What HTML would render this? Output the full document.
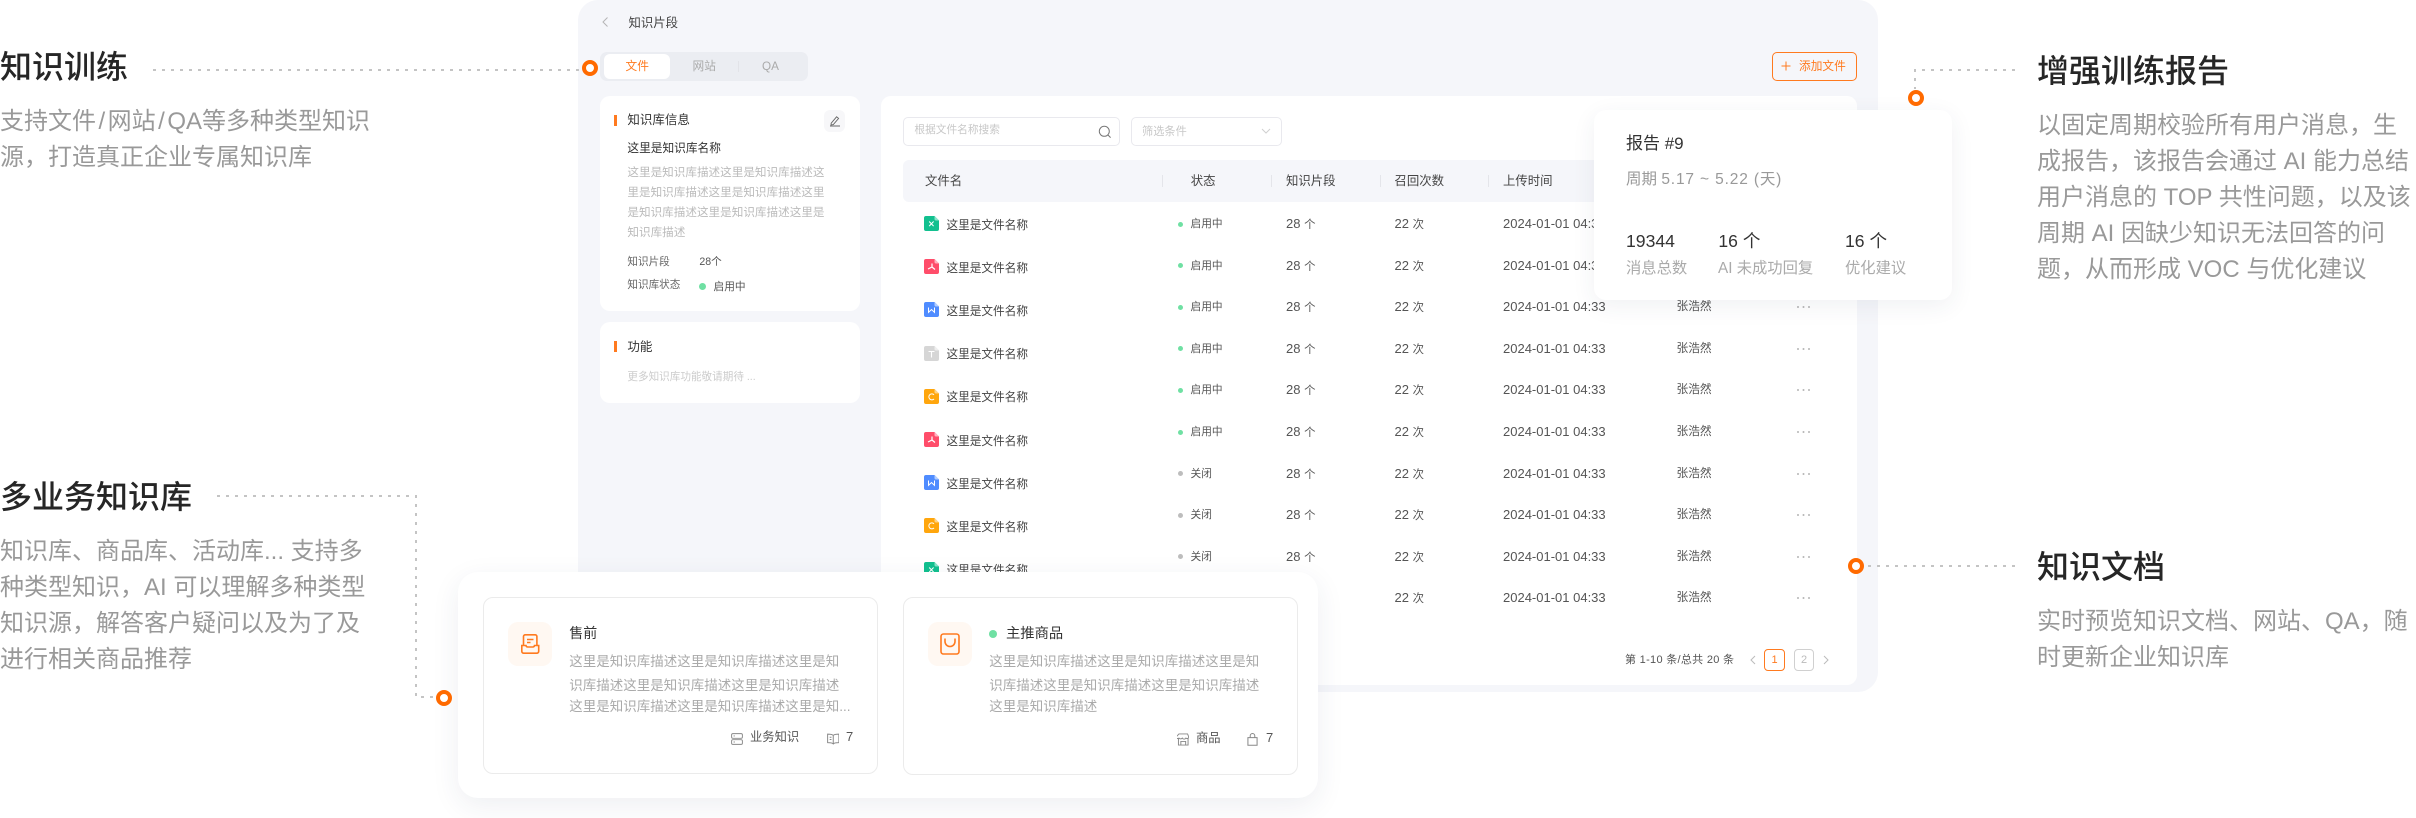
<!DOCTYPE html>
<html lang="zh-CN"><head><meta charset="utf-8"><title>知识训练</title>
<style>
html,body{margin:0;padding:0;width:2416px;height:818px;overflow:hidden;background:#fff}
body{position:relative;font-family:"Liberation Sans","Noto Sans CJK SC",sans-serif;color:#333}
div,span,svg{box-sizing:border-box}
.a{position:absolute}
.t{position:absolute;white-space:nowrap;line-height:20px;height:20px}
.h{font-size:32px;line-height:44px;height:44px;font-weight:500;color:#262626;position:absolute;white-space:nowrap}
.b{font-size:24px;line-height:36px;height:36px;color:#999;position:absolute;white-space:nowrap;left:0}
.sl{padding:0 2.5px}
.mk{position:absolute;width:16px;height:16px;border:4.5px solid #ff6a00;border-radius:50%;background:#fff;z-index:30}
.card{position:absolute;background:#fff;border-radius:10px}
.bar{position:absolute;left:614px;width:2.5px;background:#ff7a1f}
.s{font-size:11.6px;color:#bbb;margin-top:1px}
.th{font-size:12.4px;color:#444;top:171px}
.dv{position:absolute;top:175px;height:12px;width:1px;background:#e4e5ea}
.r{position:absolute;left:0;top:0;width:2416px;height:20px;margin-top:1px}
.d{position:absolute;width:5px;height:5px;border-radius:50%;left:1178px;top:7.5px;background:#6fe0a3}
.g{background:#bdbdbd}
.r span{position:absolute;top:0;line-height:20px;white-space:nowrap;color:#555}
.st{left:1190.5px;font-size:10.7px}
.n{left:1286px;font-size:13px}
.n i,.c i{font-style:normal;font-size:11.4px}
.c{left:1394.5px;font-size:13px}
.dt{left:1503px;font-size:13px}
.u{left:1676.5px;font-size:11.7px}
.m{left:1796.5px;top:0;width:14px;height:20px;font-size:11px}
.m::before{content:"";position:absolute;left:0;top:9px;width:2px;height:2px;border-radius:50%;background:#b5b5b5;box-shadow:5.5px 0 #b5b5b5,11px 0 #b5b5b5}
.fn{position:absolute;left:946.5px;font-size:11.65px;line-height:20px;height:20px;white-space:nowrap;color:#444;margin-top:1px}
.fi{position:absolute;left:924px;width:15px;height:15px}
.rp{font-size:15.3px;color:#aaa}
.ds{font-size:13.5px;color:#aaa}
</style></head><body>

<!-- panel -->
<div class="a" style="left:578px;top:0;width:1300px;height:692px;background:#f5f6fa;border-radius:20px"></div>
<svg class="a" style="left:600px;top:15px" width="10" height="14" viewBox="0 0 10 14" fill="none"><path d="M7.5 2.500L3 7l4.500 4.500" stroke="#b5b5b5" stroke-width="1"/></svg>
<div class="t" style="left:628.500px;top:12.500px;font-size:12.400px;color:#444">知识片段</div>

<div class="a" style="left:600px;top:52px;width:208px;height:29px;background:#ebedf2;border-radius:7px"></div>
<div class="a" style="left:604px;top:54px;width:66px;height:25px;background:#fff;border-radius:6px"></div>
<div class="t" style="left:625.500px;top:57px;font-size:11.700px;color:#ff7a1f">文件</div>
<div class="t" style="left:692.500px;top:57px;font-size:11.700px;color:#aaa">网站</div>
<div class="t" style="left:762px;top:57px;font-size:11.700px;color:#aaa">QA</div>
<div class="a" style="left:738px;top:61px;width:1px;height:11px;background:#e2e3e8"></div>

<div class="a" style="left:1772px;top:52px;width:85px;height:29px;border:1px solid #ff7a1f;border-radius:5px"></div>
<svg class="a" style="left:1781px;top:61px" width="10" height="10" viewBox="0 0 10 10"><path d="M5 .5v9M.5 5h9" stroke="#ff7a1f" stroke-width="1"/></svg>
<div class="t" style="left:1799px;top:57px;font-size:11.700px;color:#ff7a1f">添加文件</div>

<!-- left cards -->
<div class="card" style="left:600px;top:96px;width:260px;height:215px"></div>
<div class="bar" style="top:115px;height:11px"></div>
<div class="t" style="left:627.400px;top:110px;font-size:12.500px;color:#333">知识库信息</div>
<div class="a" style="left:824px;top:110px;width:21px;height:22px;background:#f7f7f9;border-radius:6px"></div>
<svg class="a" style="left:829px;top:115px" width="12" height="12" viewBox="0 0 12 12" fill="none" stroke="#666" stroke-width=".9"><path d="M2.200 8.200L7.600 1.800l2 1.600-5.300 6.200-2.300.4zM1 11h10"/></svg>
<div class="t" style="left:627.400px;top:138.700px;font-size:11.700px;color:#333">这里是知识库名称</div>
<div class="t s" style="left:627.400px;top:162.300px">这里是知识库描述这里是知识库描述这</div>
<div class="t s" style="left:627.400px;top:182.300px">里是知识库描述这里是知识库描述这里</div>
<div class="t s" style="left:627.400px;top:202.300px">是知识库描述这里是知识库描述这里是</div>
<div class="t s" style="left:627.400px;top:222.300px">知识库描述</div>
<div class="t" style="left:627.400px;top:251.700px;font-size:10.600px;color:#666">知识片段</div>
<div class="t" style="left:699.400px;top:251.700px;font-size:10.600px;color:#555">28个</div>
<div class="t" style="left:627.400px;top:275px;font-size:10.600px;color:#666">知识库状态</div>
<div class="a" style="left:699px;top:283px;width:7px;height:7px;border-radius:50%;background:#6fe0a3"></div>
<div class="t" style="left:713.500px;top:277px;font-size:10.700px;color:#555">启用中</div>

<div class="card" style="left:600px;top:322px;width:260px;height:81px"></div>
<div class="bar" style="top:341px;height:11px"></div>
<div class="t" style="left:627.400px;top:336.500px;font-size:12.500px;color:#333">功能</div>
<div class="t" style="left:627.400px;top:366.500px;font-size:10.600px;color:#ccc">更多知识库功能敬请期待 ...</div>

<!-- main card -->
<div class="card" style="left:881px;top:96px;width:976px;height:589px"></div>
<div class="a" style="left:903px;top:117px;width:217px;height:29px;border:1px solid #e9e9ee;border-radius:5px"></div>
<div class="t" style="left:914.400px;top:120px;font-size:10.700px;color:#c8c8c8">根据文件名称搜索</div>
<svg class="a" style="left:1098px;top:125px" width="14" height="14" viewBox="0 0 14 14" fill="none" stroke="#777" stroke-width="1"><circle cx="6.300" cy="6.300" r="5"/><path d="M10 10l2.600 2.600"/></svg>
<div class="a" style="left:1130.600px;top:117px;width:151px;height:29px;border:1px solid #e9e9ee;border-radius:5px"></div>
<div class="t" style="left:1142px;top:121.700px;font-size:11.200px;color:#c8c8c8">筛选条件</div>
<svg class="a" style="left:1261px;top:127px" width="10" height="8" viewBox="0 0 10 8" fill="none"><path d="M1 2l4 4 4-4" stroke="#d0d0d0"/></svg>

<div class="a" style="left:903px;top:160px;width:932px;height:42px;background:#f5f6fa;border-radius:6px"></div>
<div class="t th" style="left:925px">文件名</div>
<div class="dv" style="left:1162px"></div>
<div class="t th" style="left:1190.700px">状态</div>
<div class="dv" style="left:1270.600px"></div>
<div class="t th" style="left:1286px">知识片段</div>
<div class="dv" style="left:1379.700px"></div>
<div class="t th" style="left:1394.500px">召回次数</div>
<div class="dv" style="left:1487.800px"></div>
<div class="t th" style="left:1503px">上传时间</div>

<!-- file icons + names -->
<svg class="fi" style="top:216px" viewBox="0 0 15 15"><path d="M2 0h8.500L15 4.500V13a2 2 0 0 1-2 2H2a2 2 0 0 1-2-2V2a2 2 0 0 1 2-2z" fill="#12c08f"/><path d="M10.500 0L15 4.500h-3a1.500 1.500 0 0 1-1.500-1.500z" fill="#8be3c9"/><path d="M5.200 5.500l4.400 4.600M9.600 5.500L5.200 10.100" stroke="#fff" stroke-width="1"/></svg>
<div class="fn" style="top:214.500px">这里是文件名称</div>
<svg class="fi" style="top:259.200px" viewBox="0 0 15 15"><path d="M2 0h8.500L15 4.500V13a2 2 0 0 1-2 2H2a2 2 0 0 1-2-2V2a2 2 0 0 1 2-2z" fill="#ff4d6a"/><path d="M10.500 0L15 4.500h-3a1.500 1.500 0 0 1-1.500-1.500z" fill="#ffb3c0"/><path d="M8 4.500v3.500L4 10M8 8l3 2.500" stroke="#fff" stroke-width="1.200" fill="none"/></svg>
<div class="fn" style="top:257.700px">这里是文件名称</div>
<svg class="fi" style="top:302.400px" viewBox="0 0 15 15"><path d="M2 0h8.500L15 4.500V13a2 2 0 0 1-2 2H2a2 2 0 0 1-2-2V2a2 2 0 0 1 2-2z" fill="#4f8cff"/><path d="M10.500 0L15 4.500h-3a1.500 1.500 0 0 1-1.500-1.500z" fill="#b3ceff"/><path d="M4.500 5.500v4.800l3-2.800 3 2.800V5.500" stroke="#fff" stroke-width="1" fill="none"/></svg>
<div class="fn" style="top:300.900px">这里是文件名称</div>
<svg class="fi" style="top:345.600px" viewBox="0 0 15 15"><path d="M2 0h8.500L15 4.500V13a2 2 0 0 1-2 2H2a2 2 0 0 1-2-2V2a2 2 0 0 1 2-2z" fill="#d6d6d6"/><path d="M10.500 0L15 4.500h-3a1.500 1.500 0 0 1-1.500-1.500z" fill="#eee"/><path d="M4.500 5.500h6M7.500 5.500v6" stroke="#fff" stroke-width="1.100"/></svg>
<div class="fn" style="top:344.100px">这里是文件名称</div>
<svg class="fi" style="top:388.800px" viewBox="0 0 15 15"><path d="M2 0h8.500L15 4.500V13a2 2 0 0 1-2 2H2a2 2 0 0 1-2-2V2a2 2 0 0 1 2-2z" fill="#ffa60d"/><path d="M10.500 0L15 4.500h-3a1.500 1.500 0 0 1-1.500-1.500z" fill="#ffd488"/><path d="M10 5.800a3 3 0 1 0 0 4.200" stroke="#fff" stroke-width="1" fill="none"/></svg>
<div class="fn" style="top:387.300px">这里是文件名称</div>
<svg class="fi" style="top:432px" viewBox="0 0 15 15"><path d="M2 0h8.500L15 4.500V13a2 2 0 0 1-2 2H2a2 2 0 0 1-2-2V2a2 2 0 0 1 2-2z" fill="#ff4d6a"/><path d="M10.500 0L15 4.500h-3a1.500 1.500 0 0 1-1.500-1.500z" fill="#ffb3c0"/><path d="M8 4.500v3.500L4 10M8 8l3 2.500" stroke="#fff" stroke-width="1.200" fill="none"/></svg>
<div class="fn" style="top:430.500px">这里是文件名称</div>
<svg class="fi" style="top:475.200px" viewBox="0 0 15 15"><path d="M2 0h8.500L15 4.500V13a2 2 0 0 1-2 2H2a2 2 0 0 1-2-2V2a2 2 0 0 1 2-2z" fill="#4f8cff"/><path d="M10.500 0L15 4.500h-3a1.500 1.500 0 0 1-1.500-1.500z" fill="#b3ceff"/><path d="M4.500 5.500v4.800l3-2.800 3 2.800V5.500" stroke="#fff" stroke-width="1" fill="none"/></svg>
<div class="fn" style="top:473.700px">这里是文件名称</div>
<svg class="fi" style="top:518.400px" viewBox="0 0 15 15"><path d="M2 0h8.500L15 4.500V13a2 2 0 0 1-2 2H2a2 2 0 0 1-2-2V2a2 2 0 0 1 2-2z" fill="#ffa60d"/><path d="M10.500 0L15 4.500h-3a1.500 1.500 0 0 1-1.500-1.500z" fill="#ffd488"/><path d="M10 5.800a3 3 0 1 0 0 4.200" stroke="#fff" stroke-width="1" fill="none"/></svg>
<div class="fn" style="top:516.900px">这里是文件名称</div>
<svg class="fi" style="top:561.600px" viewBox="0 0 15 15"><path d="M2 0h8.500L15 4.500V13a2 2 0 0 1-2 2H2a2 2 0 0 1-2-2V2a2 2 0 0 1 2-2z" fill="#12c08f"/><path d="M10.500 0L15 4.500h-3a1.500 1.500 0 0 1-1.500-1.500z" fill="#8be3c9"/><path d="M5.200 5.500l4.400 4.600M9.600 5.500L5.200 10.100" stroke="#fff" stroke-width="1"/></svg>
<div class="fn" style="top:560.100px">这里是文件名称</div>

<!-- table rows -->
<div class="r" style="top:213px"><b class="a d"></b><span class="st">启用中</span><span class="n">28 <i>个</i></span><span class="c">22 <i>次</i></span><span class="dt">2024-01-01 04:33</span><span class="u">张浩然</span><span class="m"></span></div>
<div class="r" style="top:254.600px"><b class="a d"></b><span class="st">启用中</span><span class="n">28 <i>个</i></span><span class="c">22 <i>次</i></span><span class="dt">2024-01-01 04:33</span><span class="u">张浩然</span><span class="m"></span></div>
<div class="r" style="top:296.200px"><b class="a d"></b><span class="st">启用中</span><span class="n">28 <i>个</i></span><span class="c">22 <i>次</i></span><span class="dt">2024-01-01 04:33</span><span class="u">张浩然</span><span class="m"></span></div>
<div class="r" style="top:337.800px"><b class="a d"></b><span class="st">启用中</span><span class="n">28 <i>个</i></span><span class="c">22 <i>次</i></span><span class="dt">2024-01-01 04:33</span><span class="u">张浩然</span><span class="m"></span></div>
<div class="r" style="top:379.400px"><b class="a d"></b><span class="st">启用中</span><span class="n">28 <i>个</i></span><span class="c">22 <i>次</i></span><span class="dt">2024-01-01 04:33</span><span class="u">张浩然</span><span class="m"></span></div>
<div class="r" style="top:421px"><b class="a d"></b><span class="st">启用中</span><span class="n">28 <i>个</i></span><span class="c">22 <i>次</i></span><span class="dt">2024-01-01 04:33</span><span class="u">张浩然</span><span class="m"></span></div>
<div class="r" style="top:462.600px"><b class="a d g"></b><span class="st">关闭</span><span class="n">28 <i>个</i></span><span class="c">22 <i>次</i></span><span class="dt">2024-01-01 04:33</span><span class="u">张浩然</span><span class="m"></span></div>
<div class="r" style="top:504.200px"><b class="a d g"></b><span class="st">关闭</span><span class="n">28 <i>个</i></span><span class="c">22 <i>次</i></span><span class="dt">2024-01-01 04:33</span><span class="u">张浩然</span><span class="m"></span></div>
<div class="r" style="top:545.800px"><b class="a d g"></b><span class="st">关闭</span><span class="n">28 <i>个</i></span><span class="c">22 <i>次</i></span><span class="dt">2024-01-01 04:33</span><span class="u">张浩然</span><span class="m"></span></div>
<div class="r" style="top:587.400px"><span class="c">22 <i>次</i></span><span class="dt">2024-01-01 04:33</span><span class="u">张浩然</span><span class="m"></span></div>

<!-- pagination -->
<div class="t" style="left:1625px;top:650px;font-size:11px;letter-spacing:.3px;color:#555">第 1-10 条/总共 20 条</div>
<svg class="a" style="left:1749px;top:655px" width="8" height="10" viewBox="0 0 8 10" fill="none"><path d="M6 1L2 5l4 4" stroke="#bbb"/></svg>
<div class="a" style="left:1764px;top:649px;width:21px;height:22px;border:1px solid #ff7a1f;border-radius:4px;color:#ff7a1f;font-size:11px;line-height:20px;text-align:center">1</div>
<div class="a" style="left:1794px;top:649px;width:20px;height:22px;border:1px solid #d0d0d0;border-radius:4px;color:#bbb;font-size:11px;line-height:20px;text-align:center">2</div>
<svg class="a" style="left:1822px;top:655px" width="8" height="10" viewBox="0 0 8 10" fill="none"><path d="M2 1l4 4-4 4" stroke="#bbb"/></svg>

<!-- report card -->
<div class="a" style="left:1594px;top:110px;width:358px;height:190px;background:#fff;border-radius:12px;box-shadow:0 6px 24px rgba(40,50,90,.07);z-index:10"></div>
<div style="position:absolute;left:0;top:0;z-index:11">
<div class="t" style="left:1626px;top:134px;font-size:17px;color:#333">报告 #9</div>
<div class="t rp" style="left:1626px;top:170px;font-size:15.500px;color:#999">周期 <span style="letter-spacing:.85px">5.17 ~ 5.22 (天)</span></div>
<div class="t" style="left:1626px;top:230.700px;font-size:17.600px;color:#333">19344</div>
<div class="t" style="left:1718.400px;top:230.700px;font-size:17.600px;color:#333">16 个</div>
<div class="t" style="left:1845px;top:230.700px;font-size:17.600px;color:#333">16 个</div>
<div class="t rp" style="left:1626px;top:259px">消息总数</div>
<div class="t rp" style="left:1718px;top:259px">AI 未成功回复</div>
<div class="t rp" style="left:1845px;top:259px">优化建议</div>
</div>

<!-- bottom overlay -->
<div class="a" style="left:458px;top:572px;width:860px;height:226px;background:#fff;border-radius:20px;box-shadow:0 8px 28px rgba(40,50,90,.08);z-index:12"></div>
<div style="position:absolute;left:0;top:0;z-index:13">
<div class="a" style="left:483.300px;top:597.300px;width:394.500px;height:177px;border:1.500px solid #ebebeb;border-radius:10px"></div>
<div class="a" style="left:903.300px;top:597.300px;width:394.700px;height:177.500px;border:1.500px solid #ebebeb;border-radius:10px"></div>
<div class="a" style="left:508px;top:621.700px;width:43.700px;height:44.300px;background:#fff8f2;border-radius:10px"></div>
<svg class="a" style="left:521px;top:634px" width="18.500" height="20" viewBox="0 0 18.500 20" fill="none" stroke="#ff7a1f" stroke-width="1.600"><path d="M2.500 11V2.500a1.700 1.700 0 0 1 1.700-1.700h10a1.700 1.700 0 0 1 1.700 1.700V11"/><path d="M.8 11.500h4.200a1.800 1.800 0 0 0 1.800 1.500h4.900a1.800 1.800 0 0 0 1.800-1.500h4.200v5.800a1.900 1.900 0 0 1-1.900 1.900H2.700a1.900 1.900 0 0 1-1.900-1.900z"/><path d="M6 5.500h6.500M6 8.500h3.500"/></svg>
<div class="a" style="left:928.300px;top:621.700px;width:43.700px;height:44.300px;background:#fff8f2;border-radius:10px"></div>
<svg class="a" style="left:940px;top:633px" width="20" height="22" viewBox="0 0 20 22" fill="none" stroke="#ff7a1f" stroke-width="1.600"><rect x="1" y="1" width="18" height="20" rx="2.500"/><path d="M5 5.500v3a5 5 0 0 0 10 0v-3"/></svg>

<div class="t" style="left:569.300px;top:622.700px;font-size:14px;color:#333">售前</div>
<div class="t ds" style="left:569.300px;top:651.700px">这里是知识库描述这里是知识库描述这里是知</div>
<div class="t ds" style="left:569.300px;top:676.200px">识库描述这里是知识库描述这里是知识库描述</div>
<div class="t ds" style="left:569.300px;top:697.300px">这里是知识库描述这里是知识库描述这里是知...</div>
<svg class="a" style="left:730.700px;top:732.700px" width="12" height="12" viewBox="0 0 14 14" fill="none" stroke="#888" stroke-width="1.100"><rect x=".7" y=".7" width="12.600" height="5.500" rx="1.500"/><rect x=".7" y="7.800" width="12.600" height="5.500" rx="1.500"/><path d="M3 3.400h1.500M3 10.500h1.500"/></svg>
<div class="t" style="left:750px;top:727.300px;font-size:12.300px;color:#555">业务知识</div>
<svg class="a" style="left:826.700px;top:732.700px" width="12.500" height="12" viewBox="0 0 14 13" fill="none" stroke="#888" stroke-width="1.100"><path d="M7 2.500C6 1.200 3 1 .7 1v9.500c2.300 0 5.300.2 6.300 1.500 1-1.300 4-1.500 6.300-1.500V1C11 1 8 1.200 7 2.500zM7 2.500V12M3 4.500h2M3 7h2"/></svg>
<div class="t" style="left:846px;top:727.300px;font-size:13px;color:#555">7</div>

<div class="a" style="left:989px;top:630px;width:8px;height:8px;border-radius:50%;background:#6fe0a3"></div>
<div class="t" style="left:1006px;top:623.700px;font-size:14.300px;color:#333">主推商品</div>
<div class="t ds" style="left:989.300px;top:651.700px">这里是知识库描述这里是知识库描述这里是知</div>
<div class="t ds" style="left:989.300px;top:676.200px">识库描述这里是知识库描述这里是知识库描述</div>
<div class="t ds" style="left:989.300px;top:697.300px">这里是知识库描述</div>
<svg class="a" style="left:1176.700px;top:733px" width="12.500" height="13" viewBox="0 0 13 13" fill="none" stroke="#888" stroke-width="1"><path d="M2 .7h9l1.300 3.300a1.800 1.800 0 0 1-3 1 2.200 2.200 0 0 1-3.800 0 2.200 2.200 0 0 1-3.500 0 1.800 1.800 0 0 1-3-1zM1.500 5.500v6.800h10V5.500M4 12V8.500h5V12"/></svg>
<div class="t" style="left:1196px;top:727.800px;font-size:12.300px;color:#555">商品</div>
<svg class="a" style="left:1247px;top:733px" width="11" height="13" viewBox="0 0 12 14" fill="none" stroke="#888" stroke-width="1.100"><path d="M1 5h10v8.300H1zM3.500 5V3a2.500 2.500 0 0 1 5 0v2"/></svg>
<div class="t" style="left:1266px;top:727.800px;font-size:13px;color:#555">7</div>
</div>

<!-- dotted connector lines -->
<svg class="a" style="left:0;top:0;z-index:20;pointer-events:none" width="2416" height="818" fill="none" stroke="#c4c4c4" stroke-width="2" stroke-dasharray="3 6">
<path d="M153 70H582"/>
<path d="M217 496H416V697H438"/>
<path d="M2015 70H1915V89"/>
<path d="M2015 566H1865"/>
</svg>
<div class="mk" style="left:582px;top:60px"></div>
<div class="mk" style="left:436px;top:690px"></div>
<div class="mk" style="left:1908px;top:90px"></div>
<div class="mk" style="left:1848px;top:558px"></div>

<!-- left copy -->
<div class="h" style="left:0;top:45px">知识训练</div>
<div class="b" style="top:104px">支持文件<span class="sl">/</span>网站<span class="sl">/</span>QA等多种类型知识</div>
<div class="b" style="top:140px">源，打造真正企业专属知识库</div>

<div class="h" style="left:0;top:475px">多业务知识库</div>
<div class="b" style="top:534px">知识库、商品库、活动库... 支持多</div>
<div class="b" style="top:570px">种类型知识，AI 可以理解多种类型</div>
<div class="b" style="top:606px">知识源，解答客户疑问以及为了及</div>
<div class="b" style="top:642px">进行相关商品推荐</div>

<!-- right copy -->
<div class="h" style="left:2037px;top:49px">增强训练报告</div>
<div class="b" style="left:2037px;top:108px">以固定周期校验所有用户消息，生</div>
<div class="b" style="left:2037px;top:144px">成报告，该报告会通过 AI 能力总结</div>
<div class="b" style="left:2037px;top:180px">用户消息的 TOP 共性问题，以及该</div>
<div class="b" style="left:2037px;top:216px">周期 AI 因缺少知识无法回答的问</div>
<div class="b" style="left:2037px;top:252px">题，从而形成 VOC 与优化建议</div>

<div class="h" style="left:2037px;top:545px">知识文档</div>
<div class="b" style="left:2037px;top:604px">实时预览知识文档、网站、QA，随</div>
<div class="b" style="left:2037px;top:640px">时更新企业知识库</div>

</body></html>
